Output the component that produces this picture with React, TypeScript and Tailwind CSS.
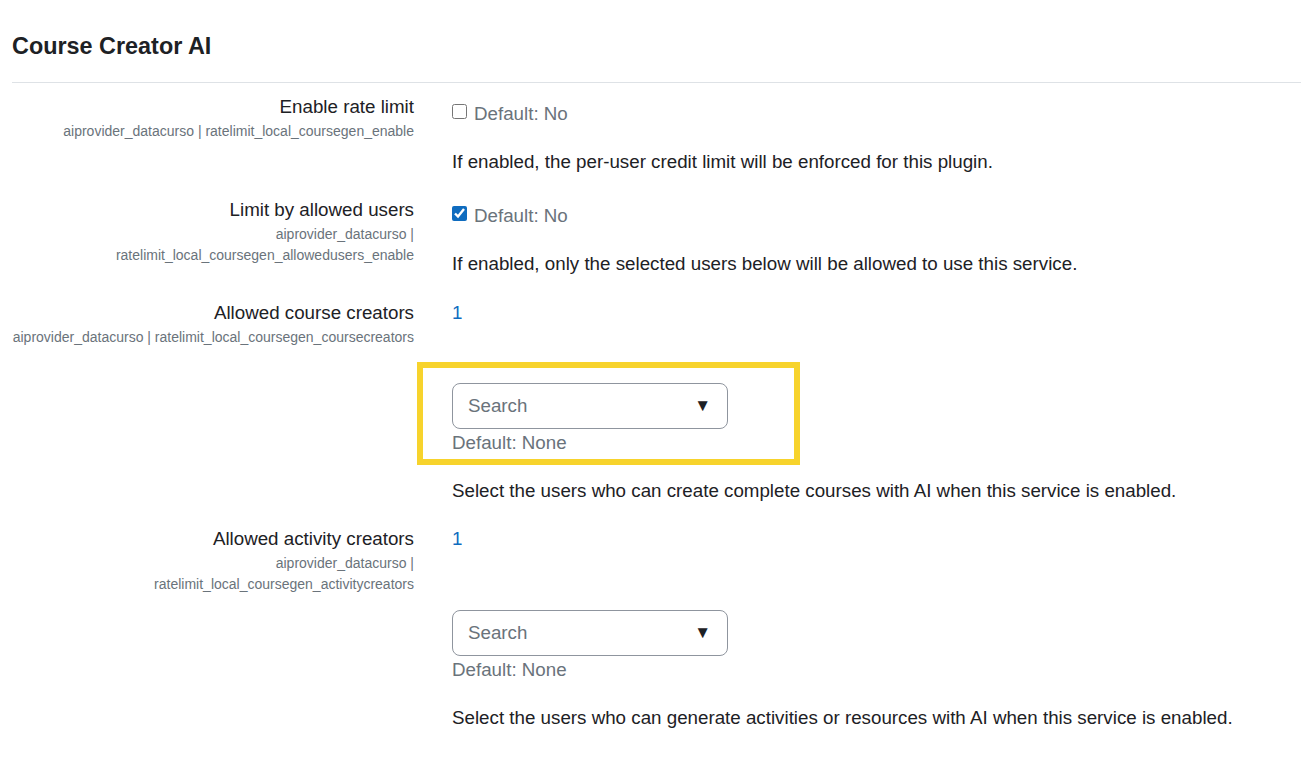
import React from 'react'

type Setting = {
  label: string
  keyLines: string[]
}

const SelectBox: React.FC = () => (
  <div className="flex h-[46px] w-[276px] items-center justify-between rounded-[8px] border border-[#8f959e] pl-[15px] pr-[16px]">
    <span className="text-[#6a737b]">Search</span>
    <span className="text-[17px] text-[#1d2125]">▼</span>
  </div>
)

const Label: React.FC<Setting> = ({ label, keyLines }) => (
  <div className="w-[402px] shrink-0 text-right">
    <div className="leading-[28px]">{label}</div>
    <div className="text-[14px] leading-[21px] text-[#6a737b]">
      {keyLines.map((line, i) => (
        <div key={i} className="whitespace-nowrap">{line}</div>
      ))}
    </div>
  </div>
)

const CheckboxRow: React.FC<Setting & { checked: boolean; description: string; offset: string; gap: string }> = ({ label, keyLines, checked, description, offset, gap }) => (
  <div className={`flex ${gap}`}>
    <Label label={label} keyLines={keyLines} />
    <div className={`ml-[38px] flex-1 ${offset}`}>
      <div className="flex items-start leading-[28px]">
        <input
          type="checkbox"
          defaultChecked={checked}
          className="mt-[4px] mr-[7px] h-[15px] w-[15px] accent-[#0f6cbf]"
        />
        <span className="text-[#6a737b]">Default: No</span>
      </div>
      <p className="mt-[20px] leading-[28px]">{description}</p>
    </div>
  </div>
)

const UsersRow: React.FC<Setting & { description: string; highlight?: boolean }> = ({ label, keyLines, description, highlight }) => (
  <div className="mb-[20px] flex">
    <Label label={label} keyLines={keyLines} />
    <div className="ml-[38px] flex-1">
      <div className="leading-[28px] text-[#0f6cbf]">1</div>
      <div className={`relative w-fit ${highlight ? 'mt-[56px]' : 'mt-[57px]'}`}>
        {highlight && (
          <div className="pointer-events-none absolute left-[-35px] top-[-21px] h-[103px] w-[383px] border-[6px] border-[#f7d32c]" />
        )}
        <SelectBox />
        <div className="leading-[28px] text-[#6a737b]">Default: None</div>
      </div>
      <p className="mt-[20px] leading-[28px]">{description}</p>
    </div>
  </div>
)

export default function App() {
  return (
    <div className="min-h-screen bg-white pl-[12px] pt-[32px] font-['Liberation_Sans',Arial,sans-serif] text-[18.75px] text-[#1d2125]">
      <h3 className="text-[23.4px] font-bold leading-[28px]">Course Creator AI</h3>
      <hr className="mt-[22px] mb-[10px] border-t border-[#dee2e6]" />

      <CheckboxRow
        label="Enable rate limit"
        keyLines={['aiprovider_datacurso | ratelimit_local_coursegen_enable']}
        checked={false}
        offset="pt-[7px]"
        gap="mb-[20px]"
        description="If enabled, the per-user credit limit will be enforced for this plugin."
      />
      <CheckboxRow
        label="Limit by allowed users"
        keyLines={['aiprovider_datacurso |', 'ratelimit_local_coursegen_allowedusers_enable']}
        checked={true}
        offset="pt-[6px]"
        gap="mb-[21px]"
        description="If enabled, only the selected users below will be allowed to use this service."
      />
      <UsersRow
        label="Allowed course creators"
        keyLines={['aiprovider_datacurso | ratelimit_local_coursegen_coursecreators']}
        highlight
        description="Select the users who can create complete courses with AI when this service is enabled."
      />
      <UsersRow
        label="Allowed activity creators"
        keyLines={['aiprovider_datacurso |', 'ratelimit_local_coursegen_activitycreators']}
        description="Select the users who can generate activities or resources with AI when this service is enabled."
      />
    </div>
  )
}
